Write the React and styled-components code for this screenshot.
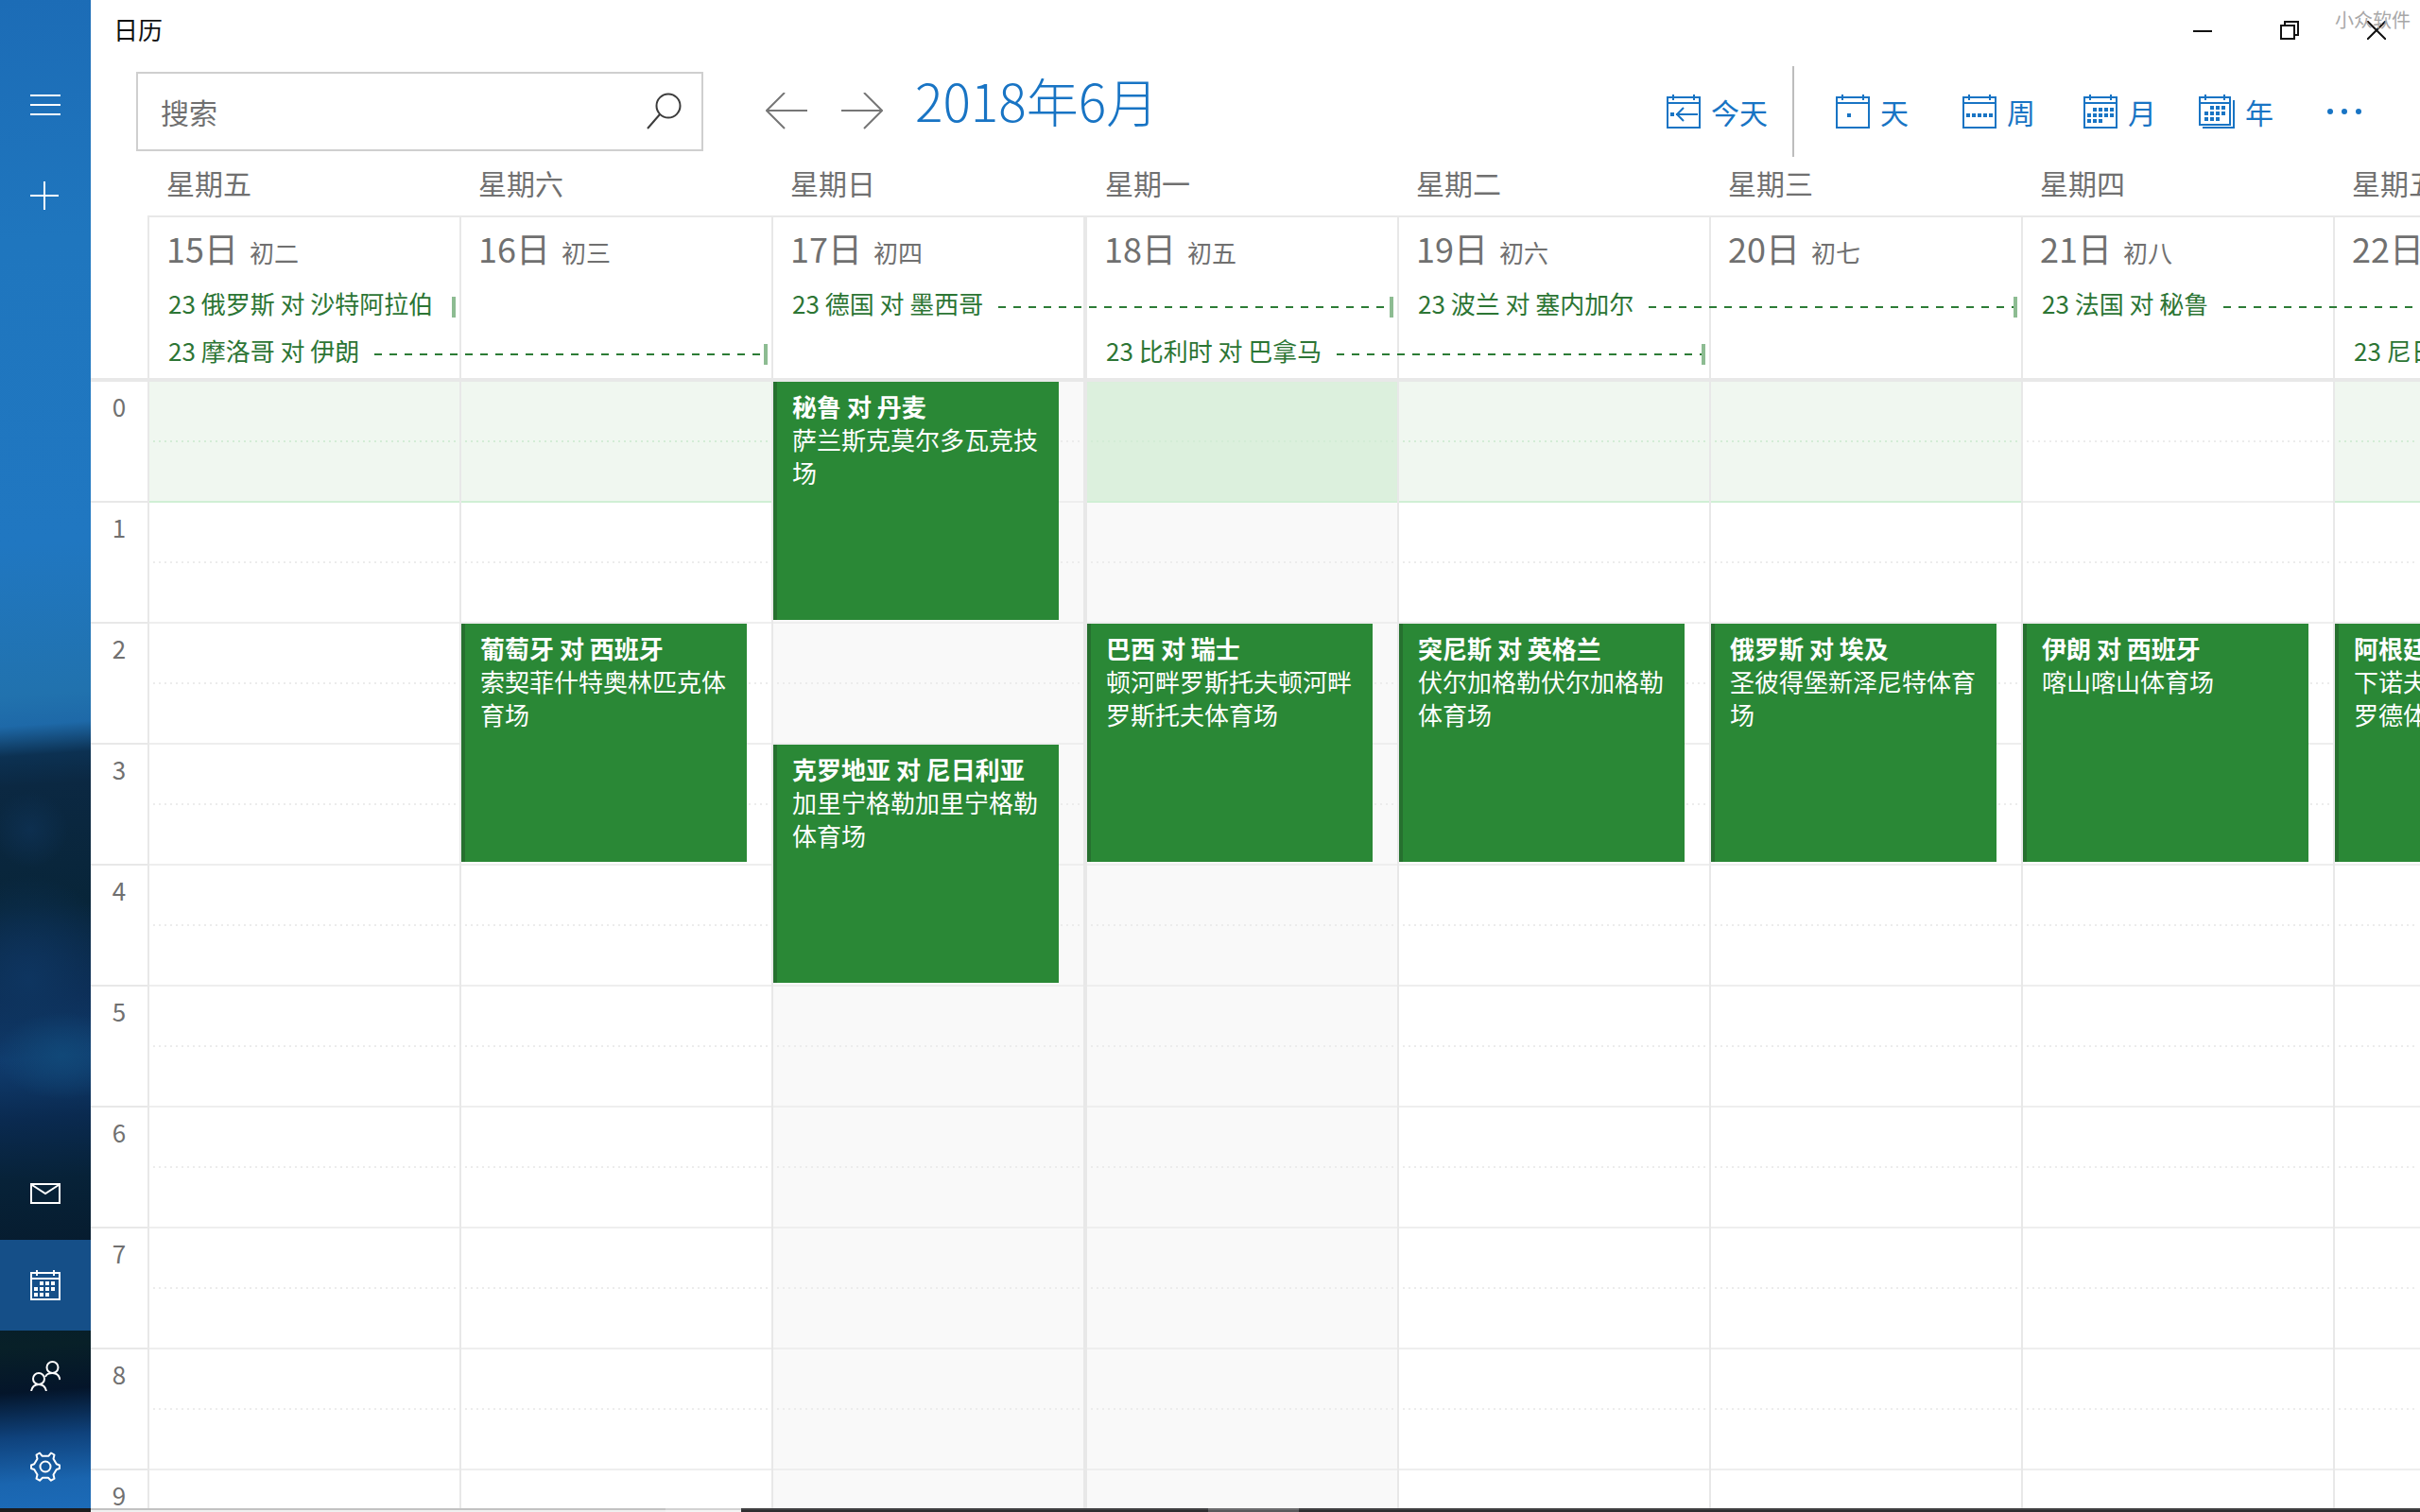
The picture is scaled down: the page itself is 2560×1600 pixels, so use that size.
import React from 'react';
import styled, { createGlobalStyle } from 'styled-components';

const BLUE = '#1874c4';
const GREEN = '#2a8836';
const LINE = '#e8e8e8';
const COLUMNS = 'minmax(0, 330fr) minmax(0, 330fr) minmax(0, 330fr) minmax(0, 332fr) minmax(0, 330fr) minmax(0, 330fr) minmax(0, 330fr) minmax(0, 92fr)';

const GlobalStyle = createGlobalStyle`
  * { box-sizing: border-box; }
  html, body, #root { height: 100%; }
  body {
    margin: 0;
    overflow: hidden;
    background: #fff;
    color: #707070;
    font-family: "Noto Sans CJK SC", "Open Sans", sans-serif;
    font-size: 26px;
  }
  button, input { font: inherit; color: inherit; }
  button { padding: 0; border: 0; background: none; cursor: pointer; }
  svg { display: block; flex: none; }
`;

const Window = styled.div`
  display: grid;
  grid-template-columns: 96px minmax(0, 1fr);
  grid-template-rows: minmax(0, 1fr) 4px;
  height: 100vh;
  overflow: hidden;
`;

const Sidebar = styled.nav`
  display: flex;
  flex-direction: column;
  justify-content: space-between;
  grid-row: 1 / 3;
  padding-top: 63px;
  color: #fff;
  border-bottom: 4px solid #1c1c1e;
  background:
    radial-gradient(ellipse 70px 46px at 66px 70%, #114878 0%, transparent 100%),
    radial-gradient(ellipse 100px 110px at 30px 65%, #0e3560 0%, transparent 100%),
    radial-gradient(ellipse 40px 40px at 32px 55%, #0d2f4f 0%, transparent 100%),
    linear-gradient(176deg, #1c6cb6 0%, #1f76be 16%, #2077c1 36%, #2172ae 46%, #1e69a8 48%, #0c3152 50%, #0b2842 52%, #082539 60%, #0c2c54 66%, #103d70 70%, #0a2a50 74%, #072238 78%, #061a2c 84%, #082028 89%, #04152a 92%, #0f427c 95%, #1a65af 98%, #1c6bb8 100%);
`;

const SideGroup = styled.div`
  display: flex;
  flex-direction: column;
  margin-bottom: ${(p) => (p.$end ? '-4px' : '0')};
`;

const SideButton = styled.button`
  display: grid;
  place-items: center;
  width: 96px;
  height: 96px;
  background: ${(p) => (p.$active ? '#154f88' : 'none')};
`;

const Main = styled.main`
  display: flex;
  flex-direction: column;
  min-width: 0;
  overflow: hidden;
`;

const TitleBar = styled.header`
  position: relative;
  display: flex;
  justify-content: space-between;
  flex: none;
  height: 64px;
  padding-left: 24px;
  line-height: 62px;
  color: #111;
`;

const WindowControls = styled.div`
  display: flex;
`;

const WindowButton = styled.button`
  display: grid;
  place-items: center;
  width: 92px;
  height: 64px;
`;

const Watermark = styled.span`
  position: absolute;
  top: 6px;
  right: 10px;
  font-size: 20px;
  line-height: 30px;
  color: #a8a8a8;
  pointer-events: none;
`;

const Toolbar = styled.div`
  display: flex;
  align-items: center;
  flex: none;
  height: 108px;
  padding: 0 48px;
`;

const SearchBox = styled.label`
  display: flex;
  align-items: center;
  width: 600px;
  height: 84px;
  padding: 0 20px 0 24px;
  border: 2px solid #cfcfcf;
  font-size: 30px;
`;

const SearchInput = styled.input`
  flex: 1;
  min-width: 0;
  padding: 0;
  border: 0;
  outline: 0;
  background: none;
  &::placeholder { color: #707070; opacity: 1; }
`;

const ArrowGroup = styled.div`
  display: flex;
  margin-left: 48px;
`;

const ArrowButton = styled.button`
  display: grid;
  place-items: center;
  width: 80px;
  height: 80px;
`;

const MonthTitle = styled.h1`
  flex: 1;
  margin: 0 0 26px 16px;
  font-size: 55px;
  font-weight: 300;
  line-height: 64px;
  white-space: nowrap;
  color: ${BLUE};
`;

const ToolButton = styled.button`
  display: flex;
  align-items: center;
  gap: 11px;
  font-size: 30px;
  line-height: 40px;
  color: ${BLUE};
`;

const Divider = styled.span`
  width: 2px;
  height: 96px;
  margin: 0 44px 0 26px;
  background: #bdbdbd;
`;

const ViewSwitch = styled.div`
  display: grid;
  grid-template-columns: 134px 128px 122px 122px;
`;

const MoreButton = styled.button`
  display: grid;
  place-items: center;
  width: 64px;
  height: 64px;
  color: ${BLUE};
`;

const WeekdayRow = styled.div`
  display: grid;
  grid-template-columns: ${COLUMNS};
  flex: none;
  height: 56px;
  margin-left: 60px;
`;

const Weekday = styled.div`
  overflow: hidden;
  padding-left: ${(p) => (p.$today ? '23px' : '20px')};
  font-size: 30px;
  line-height: 42px;
  white-space: nowrap;
`;

const DayHeader = styled.section`
  display: grid;
  grid-template-columns: ${COLUMNS};
  grid-template-rows: 66px 50px 54px;
  flex: none;
  margin-left: 60px;
  border-top: 2px solid ${LINE};
`;

const DayCell = styled.div`
  grid-column: ${(p) => p.$col};
  grid-row: 1 / 4;
  display: flex;
  align-items: baseline;
  gap: 12px;
  overflow: hidden;
  padding-left: 18px;
  border-left: ${(p) => (p.$today ? '4px' : '2px')} solid ${LINE};
  font-size: 36px;
  line-height: 64px;
  white-space: nowrap;
`;

const Lunar = styled.small`
  font-size: 26px;
`;

const AllDay = styled.button`
  display: flex;
  align-items: center;
  justify-content: space-between;
  grid-column: ${(p) => `${p.$col} / span ${p.$span}`};
  grid-row: ${(p) => p.$row};
  height: 50px;
  min-width: 0;
  padding: 0 4px 0 ${(p) => (p.$today ? '24px' : '22px')};
  overflow: hidden;
  white-space: nowrap;
  line-height: 50px;
  color: #2c7534;
`;

const Dashes = styled.span`
  flex: 1;
  height: 2px;
  margin: 8px 0 0 16px;
  background: repeating-linear-gradient(90deg, #2c7c36 0 8px, transparent 8px 16px);
`;

const EndTick = styled.span`
  flex: none;
  width: 4px;
  height: 22px;
  margin-top: 8px;
  background: #8dbc92;
`;

const Body = styled.section`
  display: grid;
  grid-template-columns: 60px minmax(0, 1fr);
  flex: 1;
  min-height: 0;
  overflow: hidden;
  border-top: 4px solid ${LINE};
`;

const Hour = styled.div`
  height: 128px;
  padding-top: 8px;
  border-bottom: 2px solid ${LINE};
  line-height: 36px;
  text-align: center;
`;

const Days = styled.div`
  display: grid;
  grid-template-columns: ${COLUMNS};
  min-height: 0;
`;

const DayColumn = styled.div`
  display: grid;
  grid-template-columns: minmax(0, 1fr);
  grid-template-rows: repeat(10, 128px);
  overflow: hidden;
  border-left: ${(p) => (p.$today ? '4px' : '2px')} solid ${LINE};
  background: ${(p) => (p.$shaded ? '#f9f9f9' : '#fff')};
`;

const Slot = styled.div`
  grid-column: 1;
  grid-row: ${(p) => p.$hour + 1};
  padding: 62px 4px 0;
  background: ${(p) => p.$fill || 'none'};
  border-bottom: 2px solid ${(p) => (p.$fill ? '#d0efd4' : '#eeeeee')};
  &::before {
    content: '';
    display: block;
    height: 2px;
    background: repeating-linear-gradient(90deg, ${(p) => (p.$fill ? '#d3ecd6' : '#ececec')} 0 2px, transparent 2px 6px);
  }
`;

const EventCard = styled.button`
  z-index: 1;
  grid-column: 1;
  grid-row: ${(p) => `${p.$hour + 1} / span 2`};
  display: flex;
  flex-direction: column;
  width: calc(100% - 26px);
  min-width: ${(p) => (p.$clipped ? '302px' : '0')};
  height: 252px;
  padding: 8px 16px 0;
  border-left: 4px solid #26702f;
  background: ${GREEN};
  color: #fff;
  line-height: 35px;
  text-align: left;
`;

const Taskbar = styled.div`
  display: grid;
  grid-template-columns: 608fr 80fr 494fr 96fr 1186fr;
`;

const TaskPart = styled.span`
  border-top: 2px solid ${(p) => p.$edge};
  background: ${(p) => p.$color};
`;

const Hamburger = () => (
  <svg width="32" height="32" viewBox="0 0 32 32" stroke="currentColor" strokeWidth="2">
    <path d="M0 6h32M0 16h32M0 26h32" />
  </svg>
);

const Plus = () => (
  <svg width="32" height="32" viewBox="0 0 32 32" stroke="currentColor" strokeWidth="2">
    <path d="M0 16h30M15 1v30" />
  </svg>
);

const Mail = () => (
  <svg width="32" height="24" viewBox="0 0 32 24" fill="none" stroke="currentColor" strokeWidth="2">
    <path d="M1 1h30v20H1zM2 2l14 9 14-9" />
  </svg>
);

const People = () => (
  <svg width="32" height="32" viewBox="0 0 32 32" fill="none" stroke="currentColor" strokeWidth="2">
    <circle cx="9" cy="19" r="6" />
    <path d="M1 32c1-5 4-7 8-7s7 2 8 7" />
    <circle cx="23.500" cy="7" r="6" />
    <path d="M16 17c1-3 4-4 7.500-4 4 0 7 2 8 7" />
  </svg>
);

const Gear = () => (
  <svg width="32" height="32" viewBox="0 0 32 32" fill="none" stroke="currentColor" strokeWidth="2" strokeLinejoin="round">
    <circle cx="16" cy="16" r="5.500" />
    <path d="M22 1.500l-2.500 3.200h-7L10 1.500 6.500 3.500l1 4.200-3.300 5.600L1 14.500v3.500l3.200 1 3.300 5.500-1 4.200 3.500 2 3-3h6l3 3 3.500-2-1-4.200 3.300-5.500 3.200-1v-3.500l-3.200-1.200-3.300-5.600 1-4.200z" />
  </svg>
);

const SearchIcon = () => (
  <svg width="38" height="40" viewBox="0 0 38 40" fill="none" stroke="#3c3c3c" strokeWidth="2">
    <circle cx="23" cy="14" r="12.500" />
    <path d="M14 23L1 38" />
  </svg>
);

const Arrow = ({ right }) => (
  <svg width="44" height="40" viewBox="0 0 44 40" fill="none" stroke="#767676" strokeWidth="2">
    <path d={right ? 'M0 19h43M24 0l19 19-19 19' : 'M44 19H1M20 0L1 19l19 19'} />
  </svg>
);

const ICONS = {
  today: { frame: 'M1 3h34v32H1zM1 9h34M7 0v6M29 0v6M10 21h23M18 14l-7 7 7 7', dots: [[4, 19]] },
  day: { frame: 'M1 3h34v32H1zM1 9h34M7 0v6M29 0v6', dots: [[12, 20]] },
  week: { frame: 'M1 3h34v32H1zM1 9h34M7 0v6M29 0v6', dots: [4, 10, 16, 22, 28].map((x) => [x, 20]) },
  month: {
    frame: 'M1 3h34v32H1zM1 9h34M7 0v6M29 0v6',
    dots: [[10, 14], [16, 14], [22, 14], [28, 14], [4, 20], [10, 20], [16, 20], [22, 20], [28, 20], [4, 26], [10, 26], [16, 26]],
  },
  year: {
    width: 38,
    frame: 'M1 3h32v29H1zM1 9h32M7 0v6M27 0v6M37 6v29H4',
    dots: [[12, 12], [18, 12], [24, 12], [6, 18], [12, 18], [18, 18], [24, 18], [6, 24], [12, 24], [18, 24]],
  },
  app: {
    width: 32,
    height: 32,
    frame: 'M1 3h30v28H1zM1 9h30M7 0v6M25 0v6',
    dots: [[10, 12], [16, 12], [22, 12], [4, 18], [10, 18], [16, 18], [22, 18], [4, 24], [10, 24], [16, 24]],
  },
};

const CalendarIcon = ({ kind }) => {
  const { width = 36, height = 36, frame, dots } = ICONS[kind];
  return (
    <svg width={width} height={height} viewBox={`0 0 ${width} ${height}`} fill="none" stroke="currentColor" strokeWidth="2">
      <path d={frame} />
      {dots.map(([x, y]) => (
        <rect key={`${x}-${y}`} x={x} y={y} width="4" height="4" fill="currentColor" stroke="none" />
      ))}
    </svg>
  );
};

const DAYS = [
  { week: '星期五', date: '15日', lunar: '初二', fill: '#f0f7f0', events: [] },
  { week: '星期六', date: '16日', lunar: '初三', fill: '#f0f7f0', events: [{ hour: 2, title: '葡萄牙 对 西班牙', place: '索契菲什特奥林匹克体育场' }] },
  {
    week: '星期日', date: '17日', lunar: '初四', shaded: true,
    events: [
      { hour: 0, title: '秘鲁 对 丹麦', place: '萨兰斯克莫尔多瓦竞技场' },
      { hour: 3, title: '克罗地亚 对 尼日利亚', place: '加里宁格勒加里宁格勒体育场' },
    ],
  },
  { week: '星期一', date: '18日', lunar: '初五', fill: '#dcf0dd', shaded: true, today: true, events: [{ hour: 2, title: '巴西 对 瑞士', place: '顿河畔罗斯托夫顿河畔罗斯托夫体育场' }] },
  { week: '星期二', date: '19日', lunar: '初六', fill: '#f0f7f0', events: [{ hour: 2, title: '突尼斯 对 英格兰', place: '伏尔加格勒伏尔加格勒体育场' }] },
  { week: '星期三', date: '20日', lunar: '初七', fill: '#f0f7f0', events: [{ hour: 2, title: '俄罗斯 对 埃及', place: '圣彼得堡新泽尼特体育场' }] },
  { week: '星期四', date: '21日', lunar: '初八', events: [{ hour: 2, title: '伊朗 对 西班牙', place: '喀山喀山体育场' }] },
  { week: '星期五', date: '22日', lunar: '初九', fill: '#f0f7f0', clipped: true, events: [{ hour: 2, title: '阿根廷 对 克罗地亚', place: '下诺夫哥罗德下诺夫哥罗德体育场' }] },
];

const ALL_DAY = [
  { col: 1, span: 1, row: 2, title: '23 俄罗斯 对 沙特阿拉伯', short: true },
  { col: 1, span: 2, row: 3, title: '23 摩洛哥 对 伊朗' },
  { col: 3, span: 2, row: 2, title: '23 德国 对 墨西哥' },
  { col: 4, span: 2, row: 3, title: '23 比利时 对 巴拿马', today: true },
  { col: 5, span: 2, row: 2, title: '23 波兰 对 塞内加尔' },
  { col: 7, span: 2, row: 2, title: '23 法国 对 秘鲁', open: true },
  { col: 8, span: 1, row: 3, title: '23 尼日利亚 对 冰岛', open: true },
];

const HOURS = [0, 1, 2, 3, 4, 5, 6, 7, 8, 9];

const VIEWS = [
  ['day', '天'],
  ['week', '周'],
  ['month', '月'],
  ['year', '年'],
];

export default function App() {
  return (
    <>
      <GlobalStyle />
      <Window>
        <Sidebar>
          <SideGroup>
            <SideButton aria-label="菜单"><Hamburger /></SideButton>
            <SideButton aria-label="新建事件"><Plus /></SideButton>
          </SideGroup>
          <SideGroup $end>
            <SideButton aria-label="邮件"><Mail /></SideButton>
            <SideButton aria-label="日历" $active><CalendarIcon kind="app" /></SideButton>
            <SideButton aria-label="人脉"><People /></SideButton>
            <SideButton aria-label="设置"><Gear /></SideButton>
          </SideGroup>
        </Sidebar>
        <Main>
          <TitleBar>
            <span>日历</span>
            <WindowControls>
              <WindowButton aria-label="最小化">
                <svg width="20" height="20" viewBox="0 0 20 20" stroke="#111" strokeWidth="2"><path d="M0 11h20" /></svg>
              </WindowButton>
              <WindowButton aria-label="还原">
                <svg width="20" height="20" viewBox="0 0 20 20" fill="none" stroke="#111" strokeWidth="2"><path d="M1 5h14v14H1zM5 5V1h14v14h-4" /></svg>
              </WindowButton>
              <WindowButton aria-label="关闭">
                <svg width="20" height="20" viewBox="0 0 20 20" stroke="#111" strokeWidth="2"><path d="M0 0l20 20M20 0L0 20" /></svg>
              </WindowButton>
            </WindowControls>
            <Watermark>小众软件</Watermark>
          </TitleBar>
          <Toolbar>
            <SearchBox>
              <SearchInput type="text" placeholder="搜索" aria-label="搜索" />
              <SearchIcon />
            </SearchBox>
            <ArrowGroup>
              <ArrowButton aria-label="上一周"><Arrow /></ArrowButton>
              <ArrowButton aria-label="下一周"><Arrow right /></ArrowButton>
            </ArrowGroup>
            <MonthTitle>2018年6月</MonthTitle>
            <ToolButton><CalendarIcon kind="today" />今天</ToolButton>
            <Divider />
            <ViewSwitch>
              {VIEWS.map(([kind, label]) => (
                <ToolButton key={kind}><CalendarIcon kind={kind} />{label}</ToolButton>
              ))}
            </ViewSwitch>
            <MoreButton aria-label="更多">
              <svg width="36" height="6" viewBox="0 0 36 6" fill="currentColor">
                <circle cx="3" cy="3" r="3" /><circle cx="18" cy="3" r="3" /><circle cx="33" cy="3" r="3" />
              </svg>
            </MoreButton>
          </Toolbar>
          <WeekdayRow>
            {DAYS.map((d) => <Weekday key={d.date} $today={d.today}>{d.week}</Weekday>)}
          </WeekdayRow>
          <DayHeader>
            {DAYS.map((d, i) => (
              <DayCell key={d.date} $col={i + 1} $today={d.today}>
                {d.date}<Lunar>{d.lunar}</Lunar>
              </DayCell>
            ))}
            {ALL_DAY.map((e) => (
              <AllDay key={e.title} $col={e.col} $span={e.span} $row={e.row} $today={e.today}>
                {e.title}
                {!e.short && <Dashes />}
                {!e.open && <EndTick />}
              </AllDay>
            ))}
          </DayHeader>
          <Body>
            <div>
              {HOURS.map((h) => <Hour key={h}>{h}</Hour>)}
            </div>
            <Days>
              {DAYS.map((d) => (
                <DayColumn key={d.date} $today={d.today} $shaded={d.shaded}>
                  {HOURS.map((h) => <Slot key={h} $hour={h} $fill={h === 0 ? d.fill : undefined} />)}
                  {d.events.map((e) => (
                    <EventCard key={e.title} $hour={e.hour} $clipped={d.clipped}>
                      <strong>{e.title}</strong>
                      <span>{e.place}</span>
                    </EventCard>
                  ))}
                </DayColumn>
              ))}
            </Days>
          </Body>
        </Main>
        <Taskbar>
          <TaskPart $edge="#c2c2c2" $color="#f0f0f0" />
          <TaskPart $edge="#d2d2d2" $color="#f4f4f4" />
          <TaskPart $edge="#404042" $color="#2e2e30" />
          <TaskPart $edge="#6c6c6e" $color="#5a5a5c" />
          <TaskPart $edge="#404042" $color="#2e2e30" />
        </Taskbar>
      </Window>
    </>
  );
}
